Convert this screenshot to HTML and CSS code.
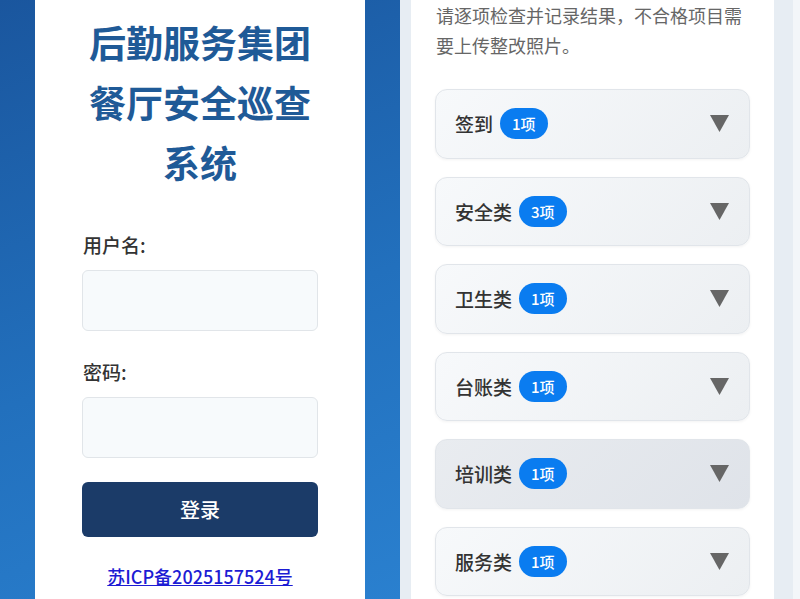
FILE: index.html
```html
<!DOCTYPE html>
<html lang="zh-CN">
<head>
<meta charset="utf-8">
<title>后勤服务集团餐厅安全巡查系统</title>
<link rel="stylesheet" href="styles.css">
</head>
<body>
<div class="screen screen-login">
  <div class="login-card">
    <h1 class="title">后勤服务集团餐厅安全巡查系统</h1>
    <label class="field-label">用户名:</label>
    <input class="field-input" type="text">
    <label class="field-label field-label-2">密码:</label>
    <input class="field-input" type="password">
    <button class="login-btn">登录</button>
    <a class="icp" href="#">苏ICP备2025157524号</a>
  </div>
</div>
<div class="screen screen-check">
  <div class="check-card">
    <p class="intro">请逐项检查并记录结果，不合格项目需要上传整改照片。</p>
    <div class="items">
      <div class="item"><span class="item-name">签到</span><span class="badge">1项</span><svg class="arrow" viewBox="0 0 19 17"><polygon points="0,0 19,0 9.5,17" fill="#666"/></svg></div>
      <div class="item"><span class="item-name">安全类</span><span class="badge">3项</span><svg class="arrow" viewBox="0 0 19 17"><polygon points="0,0 19,0 9.5,17" fill="#666"/></svg></div>
      <div class="item"><span class="item-name">卫生类</span><span class="badge">1项</span><svg class="arrow" viewBox="0 0 19 17"><polygon points="0,0 19,0 9.5,17" fill="#666"/></svg></div>
      <div class="item"><span class="item-name">台账类</span><span class="badge">1项</span><svg class="arrow" viewBox="0 0 19 17"><polygon points="0,0 19,0 9.5,17" fill="#666"/></svg></div>
      <div class="item item-hover"><span class="item-name">培训类</span><span class="badge">1项</span><svg class="arrow" viewBox="0 0 19 17"><polygon points="0,0 19,0 9.5,17" fill="#666"/></svg></div>
      <div class="item"><span class="item-name">服务类</span><span class="badge">1项</span><svg class="arrow" viewBox="0 0 19 17"><polygon points="0,0 19,0 9.5,17" fill="#666"/></svg></div>
    </div>
  </div>
  <div class="edge"></div>
</div>
</body>
</html>
```

FILE: styles.css
```css
* { box-sizing: border-box; }
html, body { margin: 0; padding: 0; }
body {
  width: 800px;
  height: 599px;
  overflow: hidden;
  display: flex;
  font-family: "Noto Sans CJK SC", "Noto Sans", sans-serif;
}
.screen { width: 400px; height: 599px; overflow: hidden; flex: none; }
.screen-login {
  background: linear-gradient(160deg, #1a569e 0%, #2270bd 55%, #2a80cf 100%);
  padding-left: 35px;
}
.login-card {
  width: 330px;
  height: 620px;
  background: #fff;
  padding: 12px 47px 0;
  display: flex;
  flex-direction: column;
}
.title {
  margin: 0;
  font-size: 37px;
  line-height: 60px;
  font-weight: 700;
  color: #1f5a97;
  text-align: center;
  letter-spacing: 0;
}
.field-label {
  font-size: 19px;
  line-height: 28px;
  color: #333;
  margin-top: 39px;
  font-weight: 500;
  padding-left: 1px;
}
.field-label-2 { margin-top: 27px; }
.field-input {
  margin-top: 11px;
  height: 61px;
  width: 236px;
  border: 1px solid #e1e5e9;
  border-radius: 6px;
  background: #f7fafc;
  outline: none;
}
.field-input + .field-label { }
.login-btn {
  margin-top: 24px;
  height: 55px;
  width: 236px;
  border: none;
  border-radius: 6px;
  background: #1b3b68;
  color: #fff;
  font-family: inherit;
  font-size: 20px;
  font-weight: 500;
}
.icp {
  margin-top: 26px;
  align-self: center;
  color: #1c1cd4;
  font-size: 18px;
  font-weight: 500;
  line-height: 26px;
  text-decoration: underline;
}
.screen-check {
  background: #e7edf3;
  padding-left: 11px;
  display: flex;
}
.check-card {
  width: 363px;
  height: 620px;
  background: #fff;
  padding: 0 24px;
  flex: none;
}
.edge {
  margin-left: 19px;
  width: 7px;
  background: #f3f6f9;
}
.intro {
  margin: 0;
  font-size: 18px;
  line-height: 30px;
  color: #666;
  padding-left: 1px;
}
.items {
  margin-top: 29px;
  display: flex;
  flex-direction: column;
  gap: 18px;
}
.item {
  height: 69.5px;
  border: 1px solid #e1e5ea;
  border-radius: 12px;
  background: linear-gradient(135deg, #f7f9fb 0%, #eceff2 100%);
  box-shadow: 0 1px 3px rgba(0, 0, 0, 0.05);
  display: flex;
  align-items: center;
  padding: 0 20px 0 19px;
}
.item-hover {
  background: linear-gradient(135deg, #e9ecf0 0%, #dfe3e9 100%);
}
.item-name {
  font-size: 19px;
  font-weight: 500;
  color: #333;
}
.badge {
  margin-left: 7px;
  height: 31px;
  padding: 0 12px;
  border-radius: 16px;
  background: #0a7cf0;
  color: #fff;
  font-size: 15px;
  font-weight: 500;
  display: flex;
  align-items: center;
}
.arrow {
  margin-left: auto;
  width: 19px;
  height: 17px;
}
```
